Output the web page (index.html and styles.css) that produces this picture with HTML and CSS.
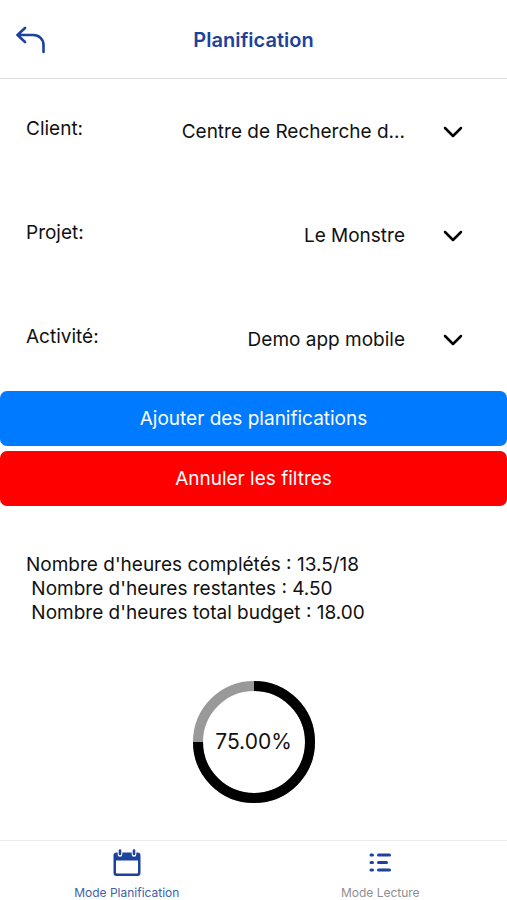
FILE: index.html
```html
<!DOCTYPE html>
<html lang="fr">
<head>
<meta charset="utf-8">
<meta name="viewport" content="width=device-width, initial-scale=1">
<title>Planification</title>
<link rel="stylesheet" href="styles.css">
</head>
<body>
<header class="header">
  <button class="back" type="button" aria-label="Retour">
    <svg width="30" height="28" viewBox="0 0 30 28" fill="none" stroke="currentColor" stroke-width="2.6" stroke-linecap="round" stroke-linejoin="round"><path d="M9 2 1.500 9 9 16M1.500 9H17.500a10 10 0 0 1 10 10v7"/></svg>
  </button>
  <h1 class="title">Planification</h1>
</header>
<main class="main">
  <form class="form">
    <div class="row">
      <label class="label" for="client">Client:</label>
      <div class="picker">
        <select class="select" id="client"><option>Centre de Recherche d...</option></select>
        <svg class="chevron" width="20" height="14" viewBox="0 0 20 14"><path d="m2 3 8 8 8-8"/></svg>
      </div>
    </div>
    <div class="row">
      <label class="label" for="projet">Projet:</label>
      <div class="picker">
        <select class="select" id="projet"><option>Le Monstre</option></select>
        <svg class="chevron" width="20" height="14" viewBox="0 0 20 14"><path d="m2 3 8 8 8-8"/></svg>
      </div>
    </div>
    <div class="row">
      <label class="label" for="activite">Activité:</label>
      <div class="picker">
        <select class="select" id="activite"><option>Demo app mobile</option></select>
        <svg class="chevron" width="20" height="14" viewBox="0 0 20 14"><path d="m2 3 8 8 8-8"/></svg>
      </div>
    </div>
    <div class="actions">
      <button class="button" type="button">Ajouter des planifications</button>
      <button class="button button-danger" type="reset">Annuler les filtres</button>
    </div>
  </form>
  <section class="stats">
    <p>Nombre d'heures complétés : 13.5/18</p>
    <p>&nbsp;Nombre d'heures restantes : 4.50</p>
    <p>&nbsp;Nombre d'heures total budget : 18.00</p>
  </section>
  <div class="progress">
    <svg class="ring" width="122" height="122" viewBox="0 0 122 122" fill="none" stroke-width="10">
      <circle cx="61" cy="61" r="56" stroke="#999"/>
      <path d="M61 5A56 56 0 1 1 5 61" stroke="#000"/>
    </svg>
    <span class="percent">75.00%</span>
  </div>
</main>
<nav class="tabs">
  <a class="tab tab-active" href="#planification">
    <svg class="tab-icon" width="28" height="28" viewBox="0 0 28 28"><path fill="currentColor" fill-rule="evenodd" d="M3.500 3.500h21a3 3 0 0 1 3 3V24a3 3 0 0 1-3 3h-21a3 3 0 0 1-3-3V6.500a3 3 0 0 1 3-3zM3 11.500V23.500q0 1 1 1h20q1 0 1-1V11.500z"/><path d="M7 1.500v4M21 1.500v4" stroke="#fff" stroke-width="4.600" stroke-linecap="round"/><path d="M7 1.500v3.500M21 1.500v3.500" stroke="currentColor" stroke-width="2.600" stroke-linecap="round"/></svg>
    <span>Mode Planification</span>
  </a>
  <a class="tab" href="#lecture">
    <svg class="tab-icon" width="28" height="28" viewBox="0 0 28 28" stroke="currentColor" stroke-width="3" stroke-linecap="round"><path d="M5 6h1.500M5 13.500h1.500M5 21h1.500M12.500 6H23.500M12.500 13.500H20.500M12.500 21H23.500"/></svg>
    <span>Mode Lecture</span>
  </a>
</nav>
</body>
</html>
```
FILE: styles.css
```css
* {
  box-sizing: border-box;
}

body {
  margin: 0;
  min-height: 100vh;
  display: flex;
  flex-direction: column;
  background: #fff;
  color: #111;
  font-family: Inter, "Liberation Sans", sans-serif;
  font-size: 19px;
  line-height: 24px;
}

button,
select {
  font: inherit;
  color: inherit;
  border: 0;
  background: none;
  padding: 0;
}

.header {
  display: grid;
  grid-template-columns: 48px 1fr 48px;
  align-items: center;
  height: 79px;
  padding: 2px 16px 0;
  border-bottom: 1px solid #dedede;
}

.back {
  display: flex;
  color: #1c439b;
}

.title {
  margin: 0;
  color: #1c439b;
  font-size: 20px;
  font-weight: 600;
  text-align: center;
}

.main {
  flex: 1;
}

.row {
  display: flex;
  justify-content: space-between;
  padding: 2px 44px 0 26px;
}

.label {
  padding: 35px 0;
  line-height: 26px;
}

.picker {
  display: flex;
  align-items: center;
  gap: 38px;
}

.select {
  appearance: none;
  height: 102px;
  text-align-last: right;
}

.chevron {
  fill: none;
  stroke: #000;
  stroke-width: 2.5px;
  stroke-linecap: round;
  stroke-linejoin: round;
}

.actions {
  display: grid;
  gap: 5px;
}

.button {
  height: 55px;
  border-radius: 7px;
  background: #007aff;
  color: #fff;
}

.button-danger {
  background: #f00;
}

.stats {
  padding: 47px 26px 0;
}

.stats p {
  margin: 0;
}

.progress {
  display: grid;
  place-items: center;
  padding: 56px 0 24px;
}

.ring,
.percent {
  grid-area: 1 / 1;
}

.percent {
  font-size: 21px;
}

.tabs {
  display: grid;
  grid-template-columns: 1fr 1fr;
  height: 60px;
  border-top: 1px solid #ececec;
}

.tab {
  display: flex;
  flex-direction: column;
  align-items: center;
  gap: 8px;
  padding-top: 8px;
  color: #8e8e93;
  font-size: 12px;
  line-height: 16px;
  text-decoration: none;
}

.tab-active {
  color: #3d5fae;
}

.tab-icon {
  color: #1c439b;
}
```
